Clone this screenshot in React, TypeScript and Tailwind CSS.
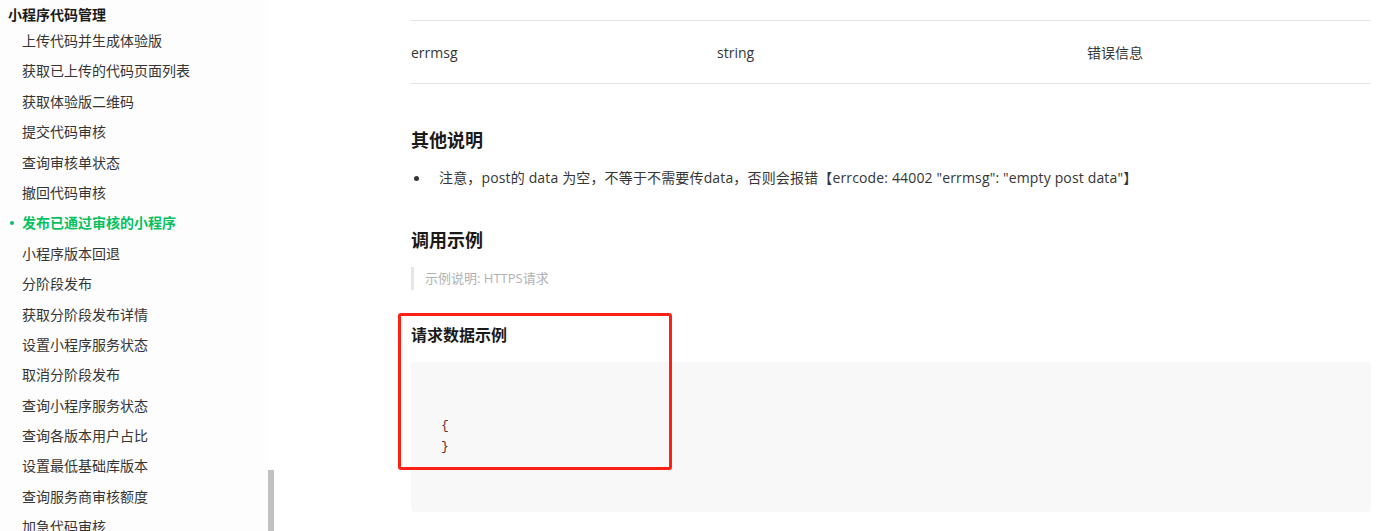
const navItems = [
  '上传代码并生成体验版',
  '获取已上传的代码页面列表',
  '获取体验版二维码',
  '提交代码审核',
  '查询审核单状态',
  '撤回代码审核',
  '发布已通过审核的小程序',
  '小程序版本回退',
  '分阶段发布',
  '获取分阶段发布详情',
  '设置小程序服务状态',
  '取消分阶段发布',
  '查询小程序服务状态',
  '查询各版本用户占比',
  '设置最低基础库版本',
  '查询服务商审核额度',
  '加急代码审核',
];

const activeItem = '发布已通过审核的小程序';

function Sidebar() {
  return (
    <aside className="w-[268px] shrink-0 bg-[#fdfdfd] h-[531px] overflow-hidden">
      <div className="pl-[8px] pt-[4px] leading-[22px] text-[14px] font-bold text-[#1a1a1a]">小程序代码管理</div>
      <ul>
        {navItems.map((item) => {
          const active = item === activeItem;
          return (
            <li
              key={item}
              className={`relative h-[30.4px] leading-[30.4px] pl-[22px] text-[14px] ${
                active ? 'text-[#07c160] font-bold' : 'text-[#353535]'
              }`}
            >
              {active && (
                <span className="absolute left-[10px] top-[13px] w-[4px] h-[4px] rounded-full bg-[#07c160]"></span>
              )}
              {item}
            </li>
          );
        })}
      </ul>
    </aside>
  );
}

function Scrollbar() {
  return (
    <div className="w-[6px] shrink-0 h-[531px] flex flex-col">
      <div className="h-[470px]"></div>
      <div className="flex-1 bg-[#c1c1c1]"></div>
    </div>
  );
}

export default function App() {
  return (
    <div
      className="relative flex w-[1388px] h-[531px] overflow-hidden bg-white text-[#353535]"
      style={{ fontFamily: '"Open Sans", "Noto Sans CJK SC", sans-serif' }}
    >
      <Sidebar />
      <Scrollbar />

      <main className="flex-1 pl-[137px] pr-[17px]">
        {/* table tail */}
        <div className="mt-[20px] border-t border-b border-[#e5e5e5] grid grid-cols-[306px_370px_1fr] h-[64px] items-center text-[14px]">
          <div>errmsg</div>
          <div>string</div>
          <div>错误信息</div>
        </div>

        <h3 className="mt-[43px] text-[18px] font-bold leading-[26px] text-[#1a1a1a]">其他说明</h3>
        <ul className="mt-[14px] text-[14px] leading-[22px]">
          <li className="flex items-center">
            <span className="ml-[3px] mr-[20px] w-[5px] h-[5px] rounded-full bg-[#353535]"></span>
            <span className="tracking-[0.15px]">
              注意，post的 data 为空，不等于不需要传data，否则会报错【errcode: 44002 "errmsg": "empty post data"】
            </span>
          </li>
        </ul>

        <h3 className="mt-[38px] text-[18px] font-bold leading-[26px] text-[#1a1a1a]">调用示例</h3>
        <blockquote className="mt-[14px] border-l-[3px] border-[#e6e6e6] pl-[11px] h-[23px] leading-[23px] text-[13px] text-[#b2b2b2]">
          示例说明: HTTPS请求
        </blockquote>

        <h4 className="mt-[33px] text-[16px] font-bold leading-[24px] text-[#1a1a1a]">请求数据示例</h4>
        <pre
          className="mt-[15px] h-[150px] rounded-[4px] bg-[#f8f8f8] pl-[30px] pt-[53px] text-[13px] leading-[21px] text-[#6d2c2c]"
          style={{ fontFamily: '"Liberation Mono", "DejaVu Sans Mono", monospace' }}
        >
          {'{\n}'}
        </pre>
      </main>

      {/* annotation box */}
      <div className="absolute left-[398px] top-[313px] w-[274px] h-[157px] border-[3px] border-[#ff2015] rounded-[3px] pointer-events-none"></div>
    </div>
  );
}
